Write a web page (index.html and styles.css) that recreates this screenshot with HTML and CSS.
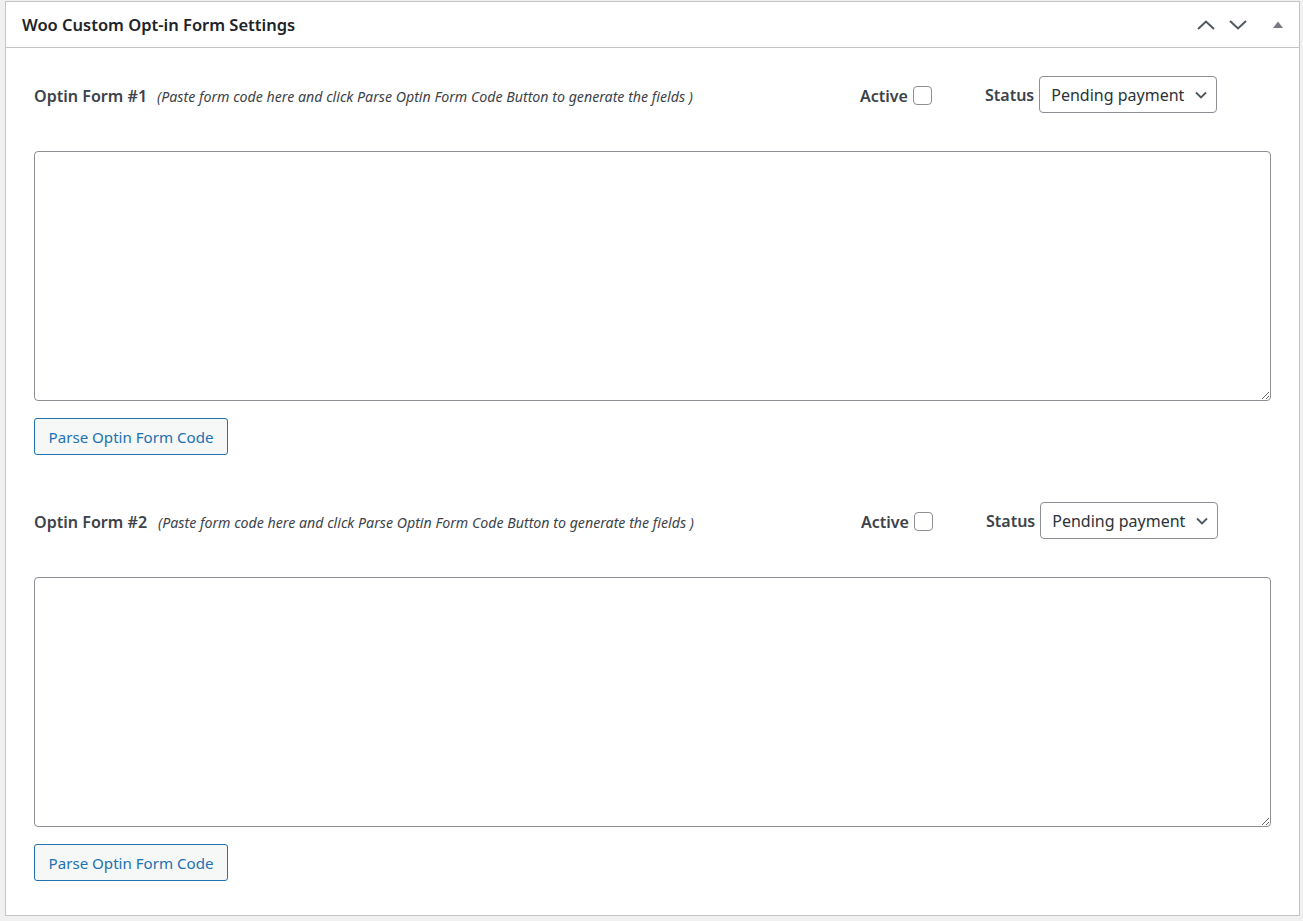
FILE: index.html
```html
<!DOCTYPE html>
<html>
<head>
<meta charset="utf-8">
<title>Woo Custom Opt-in Form Settings</title>
<link rel="stylesheet" href="styles.css">
</head>
<body>
<div class="postbox">
  <div class="postbox-header">
    <h2 class="hndle">Woo Custom Opt-in Form Settings</h2>
    <div class="handle-actions">
      <button class="handle-btn up" aria-label="Move up">
        <svg width="18" height="10" viewBox="0 0 18 10"><path d="M1 9 L9 1.5 L17 9" fill="none" stroke="#50575e" stroke-width="2"/></svg>
      </button>
      <button class="handle-btn down" aria-label="Move down">
        <svg width="18" height="10" viewBox="0 0 18 10"><path d="M1 1 L9 8.5 L17 1" fill="none" stroke="#50575e" stroke-width="2"/></svg>
      </button>
      <button class="handle-btn toggle" aria-label="Toggle panel">
        <svg width="10" height="7" viewBox="0 0 10 7"><path d="M0 7 L5 0.5 L10 7 Z" fill="#787c82"/></svg>
      </button>
    </div>
  </div>
  <div class="inside">
    <div class="optin">
      <div class="optin-row">
        <div class="optin-title"><span class="name">Optin Form #1</span><span class="hint">(Paste form code here and click Parse Optin Form Code Button to generate the fields )</span></div>
        <label class="active"><span>Active</span><span class="checkbox"></span></label>
        <div class="status"><span>Status</span>
          <div class="select"><span>Pending payment</span>
            <svg width="12" height="8" viewBox="0 0 12 8"><path d="M1 1.5 L6 6.5 L11 1.5" fill="none" stroke="#50575e" stroke-width="1.8"/></svg>
          </div>
        </div>
      </div>
      <div class="code"><textarea class="code-area"></textarea></div>
      <button class="parse-btn">Parse Optin Form Code</button>
    </div>
    <div class="optin second">
      <div class="optin-row">
        <div class="optin-title"><span class="name">Optin Form #2</span><span class="hint">(Paste form code here and click Parse Optin Form Code Button to generate the fields )</span></div>
        <label class="active"><span>Active</span><span class="checkbox"></span></label>
        <div class="status"><span>Status</span>
          <div class="select"><span>Pending payment</span>
            <svg width="12" height="8" viewBox="0 0 12 8"><path d="M1 1.5 L6 6.5 L11 1.5" fill="none" stroke="#50575e" stroke-width="1.8"/></svg>
          </div>
        </div>
      </div>
      <div class="code"><textarea class="code-area"></textarea></div>
      <button class="parse-btn">Parse Optin Form Code</button>
    </div>
  </div>
</div>
</body>
</html>
```
FILE: styles.css
```css
* { box-sizing: border-box; }
html, body { margin: 0; padding: 0; }
body {
  background: #f0f0f1;
  font-family: "Noto Sans", "Open Sans", sans-serif;
  color: #1d2327;
  width: 1303px;
  height: 921px;
  overflow: hidden;
}
.postbox {
  margin: 1px 0 0 5px;
  width: 1295px;
  height: 915px;
  background: #fff;
  border: 1px solid #c3c4c7;
}
.postbox-header {
  height: 46px;
  border-bottom: 1px solid #c3c4c7;
  display: flex;
  align-items: center;
  justify-content: space-between;
  padding: 0 0 0 16px;
}
.hndle {
  margin: 0 0 1px 0;
  font-size: 16.5px;
  font-weight: 600;
  color: #1d2327;
}
.handle-actions {
  display: flex;
  align-items: center;
  height: 100%;
}
.handle-btn {
  border: 0;
  background: none;
  padding: 0;
  margin: 0;
  height: 36px;
  display: flex;
  align-items: center;
  justify-content: center;
  width: 32px;
  cursor: pointer;
}
.handle-btn.down { margin-right: 3px; }
.handle-btn.toggle { width: 42px; }
.inside {
  padding: 28px 28px 0 28px;
}
.optin-row {
  display: flex;
  align-items: center;
  height: 36px;
}
.optin-title {
  width: 826px;
  display: flex;
  align-items: baseline;
  padding-top: 3px;
}
.name {
  font-size: 16.1px;
  font-weight: 600;
  color: #3c434a;
}
.hint {
  font-size: 14.2px;
  font-style: italic;
  color: #3c434a;
  margin-left: 10px;
}
.active {
  width: 125px;
  display: flex;
  align-items: center;
  font-size: 16px;
  font-weight: 600;
  color: #3c434a;
  padding-top: 3px;
}
.checkbox {
  width: 19px;
  height: 19px;
  border: 1px solid #8c8f94;
  border-radius: 4px;
  margin-left: 5px;
  background: #fff;
}
.status {
  display: flex;
  align-items: center;
  font-size: 16px;
  font-weight: 600;
  color: #3c434a;
}
.status > span { margin-right: 5px; padding-top: 1px; }
.select {
  width: 178px;
  height: 37px;
  border: 1px solid #8c8f94;
  border-radius: 4px;
  display: flex;
  align-items: center;
  justify-content: space-between;
  padding: 2px 9px 0 11px;
  font-size: 16px;
  font-weight: 400;
  color: #2c3338;
}
.select svg { margin-top: -1px; }
.code {
  margin-top: 39px;
}
.code-area {
  display: block;
  width: 1237px;
  height: 250px;
  border: 1px solid #8c8f94;
  border-radius: 4px;
  resize: vertical;
  margin: 0;
  font-family: inherit;
}
.parse-btn {
  margin-top: 17px;
  width: 194px;
  height: 37px;
  border: 1px solid #2271b1;
  border-radius: 3px;
  background: #f6f7f7;
  color: #2271b1;
  font-family: "Noto Sans", "Open Sans", sans-serif;
  font-size: 15.1px;
  padding: 0;
  display: block;
  cursor: pointer;
}
.optin.second { margin-top: 47px; }
.optin.second .optin-title { width: 827px; }
.optin.second .hint { margin-left: 11px; }
```
